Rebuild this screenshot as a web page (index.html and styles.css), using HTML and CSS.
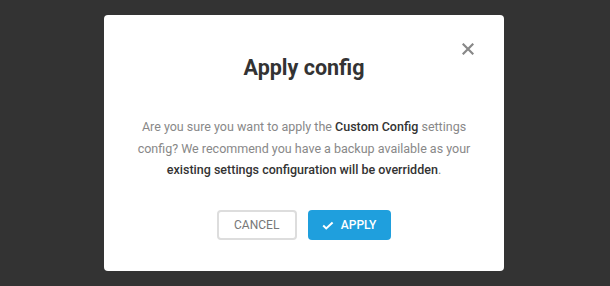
FILE: index.html
```html
<!DOCTYPE html>
<html lang="en">
<head>
    <meta charset="UTF-8">
    <meta name="viewport" content="width=device-width, initial-scale=1.0">
    <title>Apply config</title>
    <link rel="stylesheet" href="styles.css">
</head>
<body>
    <div class="overlay">
        <div class="modal">
            <button class="close-btn" aria-label="Close">
                <svg width="12" height="12" viewBox="0 0 12 12">
                    <path d="M1.5 1.5 L10.5 10.5 M10.5 1.5 L1.5 10.5" stroke="#888" stroke-width="2.2" stroke-linecap="square"/>
                </svg>
            </button>
            <h2 class="modal-title">Apply config</h2>
            <p class="modal-text">
                Are you sure you want to apply the <strong>Custom Config</strong> settings config? We recommend you have a backup available as your <strong>existing settings configuration will be overridden</strong>.
            </p>
            <div class="modal-actions">
                <button class="btn btn-ghost">Cancel</button>
                <button class="btn btn-primary">
                    <svg width="12" height="9" viewBox="0 0 12 9">
                        <path d="M1.2 4.6 L4.2 7.4 L10.6 1.4" fill="none" stroke="#fff" stroke-width="2"/>
                    </svg>
                    Apply
                </button>
            </div>
        </div>
    </div>
</body>
</html>
```

FILE: styles.css
```css
* {
    box-sizing: border-box;
}

body {
    margin: 0;
    font-family: Roboto, "Liberation Sans", sans-serif;
    background: #333;
}

.overlay {
    height: 286px;
    padding: 15px 0 0 104px;
}

.modal {
    position: relative;
    width: 400px;
    height: 256px;
    background: #fff;
    border-radius: 4px;
    padding: 39px 30px 30px;
    text-align: center;
}

.close-btn {
    position: absolute;
    top: 28px;
    right: 30px;
    background: none;
    border: 0;
    padding: 0;
    width: 12px;
    height: 12px;
    cursor: pointer;
}

.close-btn svg {
    display: block;
}

.modal-title {
    margin: 0 0 34px;
    font-size: 21.5px;
    line-height: 28px;
    font-weight: 700;
    color: #333;
}

.modal-text {
    margin: 0 0 29.5px;
    font-size: 12.5px;
    line-height: 21.5px;
    color: #888;
}

.modal-text strong {
    font-weight: 500;
    color: #333;
}

.modal-actions {
    display: flex;
    justify-content: center;
    gap: 11px;
}

.btn {
    height: 30px;
    border-radius: 4px;
    font-family: inherit;
    font-size: 12px;
    text-transform: uppercase;
    display: flex;
    align-items: center;
    cursor: pointer;
}

.btn-ghost {
    background: #fff;
    border: 2px solid #ddd;
    color: #777;
    padding: 0 15.5px;
    font-weight: 400;
}

.btn-primary {
    background: #1f9fdd;
    border: 0;
    color: #fff;
    padding: 0 15px 0 14px;
    gap: 7px;
    font-weight: 500;
}
```
